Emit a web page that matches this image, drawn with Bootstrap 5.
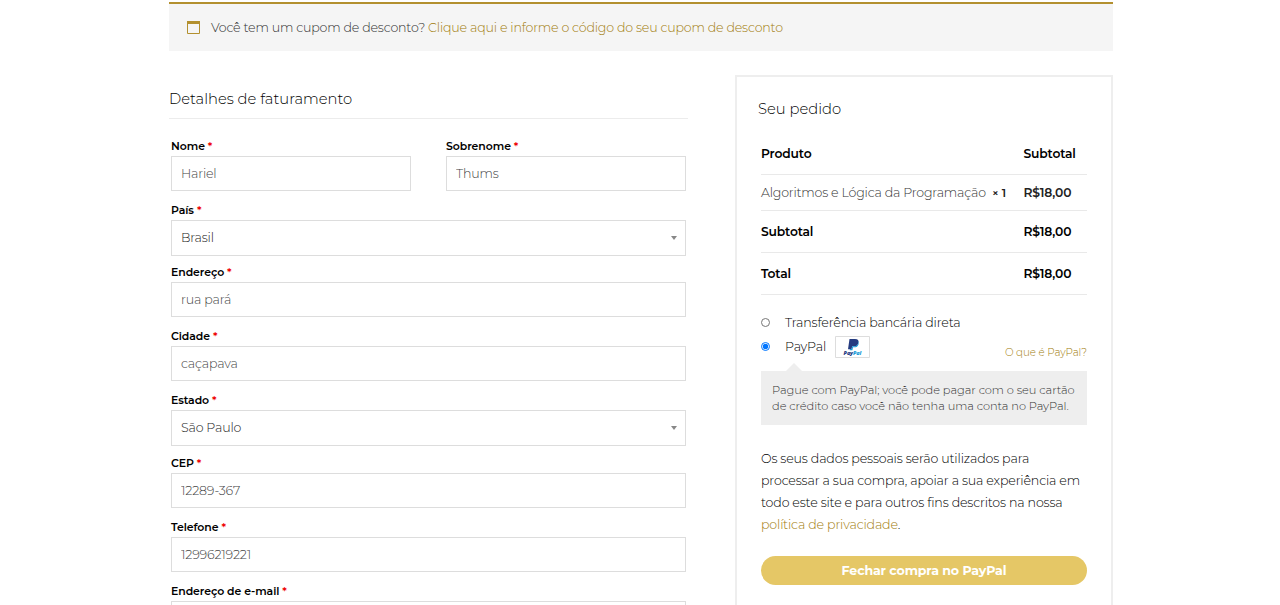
<!DOCTYPE html>
<html lang="pt-BR">
<head>
<meta charset="utf-8">
<meta name="viewport" content="width=device-width, initial-scale=1">
<title>Finalizar compra</title>
<link href="https://cdn.jsdelivr.net/npm/bootstrap@5.3.0/dist/css/bootstrap.min.css" rel="stylesheet">
<style>
  body { font-family: Montserrat, Inter, "Open Sans", sans-serif; font-weight: 300; font-size: 12.6px; letter-spacing: -.15px; color: #000; background: #fff; }
  a { color: #a27c0c; text-decoration: none; }
  .checkout { width: 944px; height: 605px; overflow: hidden; margin-left: 169px; padding-top: 2px; }
  .coupon { height: 49px; background: #f5f5f5; border-top: 2px solid #b3902f; padding: 0 0 0 18px; color: #333; line-height: 47px; letter-spacing: -.18px; }
  .coupon svg { margin-right: 11px; }
  .billing { width: 519px; padding-top: 36px; }
  .title { font-size: 14.75px; font-weight: 300; line-height: 24px; letter-spacing: 0; margin: 0; color: #000; }
  .billing .title { padding-bottom: 7px; border-bottom: 1px solid #ececec; }
  .fields { padding: 17px 2px 0; }
  .field { margin-bottom: 9px; }
  .fields .country { margin-bottom: 6px; }
  .fields .state { margin-bottom: 7px; }
  .fields label { display: block; height: 20px; line-height: 20px; font-size: 10.9px; letter-spacing: -.05px; font-weight: 600; color: #000; }
  .fields label b { color: #e00; font-weight: 600; }
  .fields .form-control, .fields .form-select { height: 35px; border: 1px solid #ddd; border-radius: 0; padding: 0 9px 1px; font-size: 12.6px; letter-spacing: -.18px; font-weight: 300; color: #444; line-height: 32px; background-color: #fff; }
  .fields .form-select { height: 36px; padding: 0 9px 1px; color: #222; background: url("data:image/svg+xml,%3Csvg xmlns='http://www.w3.org/2000/svg' viewBox='0 0 6 4'%3E%3Cpath fill='%23888' d='M0 0h6L3 4z'/%3E%3C/svg%3E") no-repeat right 8px top 15px / 6px 4px; }
  .half { width: 240px; }
  .order { width: 378px; height: 560px; margin-top: 24px; border: 2px solid #eee; padding: 20px 24px; }
  .order .title { margin-left: -3px; }
  .lines { margin-top: 12px; }
  .line { display: grid; grid-template-columns: 262.5px auto; align-items: center; height: 42px; padding-top: 1px; border-bottom: 1px solid #e9e9e9; font-weight: 600; font-size: 12.3px; color: #000; }
  .line .item-name { font-weight: 300; font-size: 12.6px; letter-spacing: -.18px; color: #333; }
  .line.item { height: 36px; padding-top: 0; line-height: 20px; color: #222; }
  .qty { font-size: 11.5px; margin-left: 3px; }
  .pay { margin-top: 16px; }
  .pay .choice { height: 24px; }
  .pay input { width: 9px; height: 9px; margin: 0 15px 1px 0; }
  .brand { width: 35px; height: 22px; margin-left: 9px; }
  .what { font-size: 10.3px; letter-spacing: -.05px; padding-top: 11px; }
  .note { position: relative; margin-top: 12px; height: 54px; background: #eee; color: #333; font-size: 11.4px; letter-spacing: -.05px; line-height: 16px; padding: 11px 0 0 11px; white-space: nowrap; }
  .note::before { content: ""; position: absolute; left: 25px; top: -8px; border: 8px solid transparent; border-top: 0; border-bottom-color: #eee; }
  .privacy { margin: 23px 0 0; line-height: 22.15px; white-space: nowrap; }
  .buy { width: 100%; height: 29px; margin-top: 19.4px; border: 0; border-radius: 15px; background: #e5c766; color: #fff; font-weight: 700; font-size: 12.6px; letter-spacing: -.13px; padding: 1px 0 0; }
</style>
</head>
<body>
<main class="checkout">
  <div class="coupon d-flex align-items-center">
    <svg width="13" height="13" viewBox="0 0 13 13"><path d="M.5 1h12v11.500H.5z" fill="none" stroke="#b3902f"/><path d="M0 0h13v3H0z" fill="#b3902f"/></svg>
    <span>Você tem um cupom de desconto? <a href="#">Clique aqui e informe o código do seu cupom de desconto</a></span>
  </div>
  <div class="d-flex justify-content-between align-items-start">
    <section class="billing">
      <h3 class="title">Detalhes de faturamento</h3>
      <form class="fields">
        <div class="d-flex justify-content-between">
          <div class="field half"><label for="n">Nome <b>*</b></label><input id="n" class="form-control" value="Hariel"></div>
          <div class="field half"><label for="s">Sobrenome <b>*</b></label><input id="s" class="form-control" value="Thums"></div>
        </div>
        <div class="field country"><label for="p">País <b>*</b></label><select id="p" class="form-select"><option>Brasil</option></select></div>
        <div class="field"><label for="e">Endereço <b>*</b></label><input id="e" class="form-control" value="rua pará"></div>
        <div class="field"><label for="c">Cidade <b>*</b></label><input id="c" class="form-control" value="caçapava"></div>
        <div class="field state"><label for="u">Estado <b>*</b></label><select id="u" class="form-select"><option>São Paulo</option></select></div>
        <div class="field"><label for="z">CEP <b>*</b></label><input id="z" class="form-control" value="12289-367"></div>
        <div class="field"><label for="t">Telefone <b>*</b></label><input id="t" class="form-control" value="12996219221"></div>
        <div><label for="m">Endereço de e-mail <b>*</b></label><input id="m" class="form-control"></div>
      </form>
    </section>
    <aside class="order">
      <h3 class="title">Seu pedido</h3>
      <div class="lines">
        <div class="line"><span>Produto</span><span>Subtotal</span></div>
        <div class="line item"><span><span class="item-name">Algoritmos e Lógica da Programação</span> <span class="qty">× 1</span></span><span>R$18,00</span></div>
        <div class="line"><span>Subtotal</span><span>R$18,00</span></div>
        <div class="line"><span>Total</span><span>R$18,00</span></div>
      </div>
      <div class="pay">
        <label class="choice d-flex align-items-center"><input type="radio" name="pay"><span>Transferência bancária direta</span></label>
        <div class="choice d-flex align-items-center">
          <input type="radio" name="pay" id="pp" checked><label for="pp">PayPal</label>
          <svg class="brand" viewBox="0 0 35 22"><path d="M.5.500h34v21H.5z" fill="#fff" stroke="#ddd"/><path d="M14.500 3h5.500c3 0 4 1.600 3.400 3.900-.6 2.500-2.300 3.400-4.600 3.400h-1.600l-.7 3H13z" fill="#253b80"/><path d="M22.900 5c1 .9 1 2.200.6 3.500-.6 2-2.200 2.800-4.200 2.800H18l-.6 3h-2.700l.3-1.300h1.500l.7-2.700h1.600c2.300 0 4-1 4.600-3.400z" fill="#179bd7"/><text x="8.600" y="19.200" font-family="Open Sans, sans-serif" font-size="5.500" font-weight="800" font-style="italic" fill="#253b80" textLength="17.500">Pay<tspan fill="#179bd7">Pal</tspan></text></svg>
          <a href="#" class="what ms-auto">O que é PayPal?</a>
        </div>
        <div class="note">Pague com PayPal; você pode pagar com o seu cartão<br>de crédito caso você não tenha uma conta no PayPal.</div>
      </div>
      <p class="privacy">Os seus dados pessoais serão utilizados para<br>processar a sua compra, apoiar a sua experiência em<br>todo este site e para outros fins descritos na nossa<br><a href="#">política de privacidade</a>.</p>
      <button class="buy">Fechar compra no PayPal</button>
    </aside>
  </div>
</main>
<script src="https://cdn.jsdelivr.net/npm/bootstrap@5.3.0/dist/js/bootstrap.bundle.min.js"></script>
</body>
</html>
